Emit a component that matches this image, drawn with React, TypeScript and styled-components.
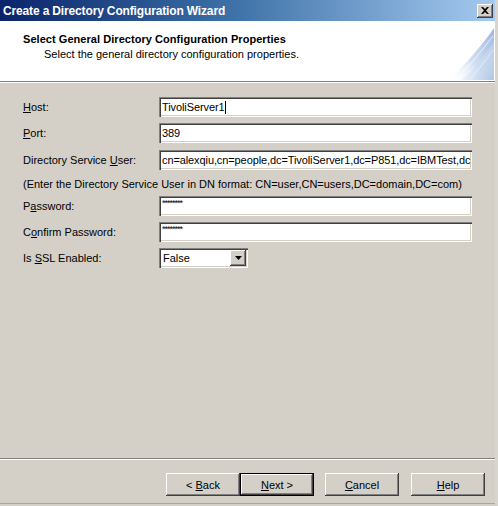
import React from "react";
import styled, { createGlobalStyle } from "styled-components";

const Global = createGlobalStyle`
  html, body { margin: 0; padding: 0; background: #d4d0c8; }
  * { box-sizing: border-box; }
`;

const Window = styled.div`
  width: 498px;
  height: 506px;
  display: flex;
  flex-direction: column;
  background: #d4d0c8;
  border-right: 3px solid #d8d5ce;
  border-bottom: 2px solid #d4d0c8;
  font-family: "Liberation Sans", Arial, sans-serif;
  font-size: 11px;
  color: #000;
  overflow: hidden;
`;

const TitleBar = styled.div`
  height: 21px;
  flex: none;
  display: flex;
  align-items: center;
  justify-content: space-between;
  padding: 0 2px 0 3px;
  background: linear-gradient(to right, #0a246a 0%, #3a6ea5 45%, #a6caf0 100%);
`;

const TitleText = styled.span`
  color: #fff;
  font-weight: bold;
  font-size: 12px;
  letter-spacing: -0.15px;
`;

const CloseButton = styled.div`
  width: 16px;
  height: 14px;
  background: #d4d0c8;
  box-shadow: inset -1px -1px #404040, inset 1px 1px #ffffff,
    inset -2px -2px #808080, inset 2px 2px #d4d0c8;
  display: flex;
  align-items: center;
  justify-content: center;
`;

const Header = styled.div`
  height: 61px;
  flex: none;
  display: flex;
  background: #fff;
  border-bottom: 1px solid #808080;
  box-shadow: 0 1px 0 #ffffff;
`;

const HeaderText = styled.div`
  flex: 1;
  padding: 12px 0 0 23px;
  display: flex;
  flex-direction: column;
  gap: 3px;
`;

const HeaderTitle = styled.div`
  font-weight: bold;
  font-size: 11px;
  letter-spacing: 0.05px;
`;

const HeaderSub = styled.div`
  padding-left: 21px;
  font-size: 11px;
`;

const HeaderArt = styled.svg`
  align-self: flex-end;
  margin: 0 1px 1px 0;
  flex: none;
`;

const Body = styled.div`
  flex: 1;
  padding: 15px 0 0 23px;
  display: flex;
  flex-direction: column;
`;

const Row = styled.div<{ $gap?: number }>`
  display: grid;
  grid-template-columns: 136px 313px;
  align-items: center;
  height: 20px;
  margin-bottom: ${(p) => p.$gap ?? 6}px;
`;

const Note = styled.div`
  height: 26px;
  display: flex;
  align-items: center;
  padding-top: 1px;
`;

const Field = styled.div`
  height: 20px;
  background: #fff;
  box-shadow: inset 1px 1px #808080, inset 2px 2px #404040,
    inset -1px -1px #ffffff, inset -2px -2px #d4d0c8;
  padding: 0 3px;
  display: flex;
  align-items: center;
  white-space: nowrap;
  overflow: hidden;
  letter-spacing: -0.1px;
`;

const Masked = styled.span`
  font-size: 9px;
  letter-spacing: -1px;
  align-self: flex-start;
  margin-top: 2px;
`;

const Caret = styled.span`
  display: inline-block;
  width: 1px;
  height: 13px;
  background: #000;
  margin-left: 1px;
`;

const Select = styled.div`
  width: 89px;
  height: 20px;
  background: #fff;
  box-shadow: inset 1px 1px #808080, inset 2px 2px #404040,
    inset -1px -1px #ffffff, inset -2px -2px #d4d0c8;
  display: flex;
  align-items: center;
  padding: 2px;
`;

const SelectValue = styled.span`
  flex: 1;
  padding-left: 2px;
`;

const DropButton = styled.div`
  width: 16px;
  height: 16px;
  background: #d4d0c8;
  box-shadow: inset -1px -1px #404040, inset 1px 1px #ffffff,
    inset -2px -2px #808080;
  display: flex;
  align-items: center;
  justify-content: center;
`;

const Footer = styled.div`
  height: 46px;
  flex: none;
  border-top: 1px solid #808080;
  box-shadow: inset 0 1px #ffffff;
  display: flex;
  align-items: flex-start;
  padding: 14px 10px 0 0;
  justify-content: flex-end;
  border-bottom: 1px solid #a8a59e;
`;

const Button = styled.div<{ $default?: boolean; $gapLeft?: number }>`
  width: 74px;
  height: 23px;
  margin-left: ${(p) => p.$gapLeft ?? 0}px;
  background: #d4d0c8;
  display: flex;
  align-items: center;
  justify-content: center;
  font-size: 11px;
  white-space: pre;
  box-shadow: ${(p) =>
    p.$default
      ? "inset 0 0 0 1px #000, inset -2px -2px #404040, inset 2px 2px #ffffff, inset -3px -3px #808080"
      : "inset -1px -1px #404040, inset 1px 1px #ffffff, inset -2px -2px #808080, inset 2px 2px #d4d0c8"};
`;

export default function App() {
  return (
    <>
      <Global />
      <Window>
        <TitleBar>
          <TitleText>Create a Directory Configuration Wizard</TitleText>
          <CloseButton>
            <svg width="8" height="7" viewBox="0 0 8 7">
              <path d="M0 0 L2 0 L4 2 L6 0 L8 0 L5 3.5 L8 7 L6 7 L4 5 L2 7 L0 7 L3 3.5 Z" fill="#000" />
            </svg>
          </CloseButton>
        </TitleBar>
        <Header>
          <HeaderText>
            <HeaderTitle>Select General Directory Configuration Properties</HeaderTitle>
            <HeaderSub>Select the general directory configuration properties.</HeaderSub>
          </HeaderText>
          <HeaderArt width="52" height="56" viewBox="0 0 52 56">
            <defs>
              <linearGradient id="sw" x1="0" y1="1" x2="1" y2="0">
                <stop offset="0" stopColor="#ffffff" stopOpacity="0" />
                <stop offset="0.45" stopColor="#c8d8ef" stopOpacity="0.85" />
                <stop offset="1" stopColor="#9ab6df" />
              </linearGradient>
              <linearGradient id="sw2" x1="0" y1="0" x2="1" y2="1">
                <stop offset="0" stopColor="#ffffff" stopOpacity="0" />
                <stop offset="1" stopColor="#a8c0e4" />
              </linearGradient>
            </defs>
            <path d="M6 56 C 22 42, 38 24, 52 4 L52 56 Z" fill="url(#sw)" />
            <path d="M20 56 C 32 46, 42 32, 52 18 L52 56 Z" fill="url(#sw2)" opacity="0.8" />
            <path d="M14 55 C 28 42, 40 26, 51 12" stroke="#ffffff" strokeWidth="1" fill="none" opacity="0.7" />
            <path d="M28 55 C 36 46, 44 36, 51 26" stroke="#ffffff" strokeWidth="0.8" fill="none" opacity="0.6" />
          </HeaderArt>
        </Header>
        <Body>
          <Row>
            <span><u>H</u>ost:</span>
            <Field>TivoliServer1<Caret /></Field>
          </Row>
          <Row $gap={7}>
            <span><u>P</u>ort:</span>
            <Field>389</Field>
          </Row>
          <Row $gap={0}>
            <span>Directory Service <u>U</u>ser:</span>
            <Field>cn=alexqiu,cn=people,dc=TivoliServer1,dc=P851,dc=IBMTest,dc</Field>
          </Row>
          <Note>(Enter the Directory Service User in DN format: CN=user,CN=users,DC=domain,DC=com)</Note>
          <Row>
            <span>P<u>a</u>ssword:</span>
            <Field><Masked>********</Masked></Field>
          </Row>
          <Row>
            <span>C<u>o</u>nfirm Password:</span>
            <Field><Masked>********</Masked></Field>
          </Row>
          <Row>
            <span>Is <u>S</u>SL Enabled:</span>
            <Select>
              <SelectValue>False</SelectValue>
              <DropButton>
                <svg width="7" height="4" viewBox="0 0 7 4">
                  <path d="M0 0 H7 L3.5 4 Z" fill="#000" />
                </svg>
              </DropButton>
            </Select>
          </Row>
        </Body>
        <Footer>
          <Button><span>&lt; <u>B</u>ack</span></Button>
          <Button $default><span><u>N</u>ext &gt;</span></Button>
          <Button $gapLeft={11}><span><u>C</u>ancel</span></Button>
          <Button $gapLeft={12}><span><u>H</u>elp</span></Button>
        </Footer>
      </Window>
    </>
  );
}
